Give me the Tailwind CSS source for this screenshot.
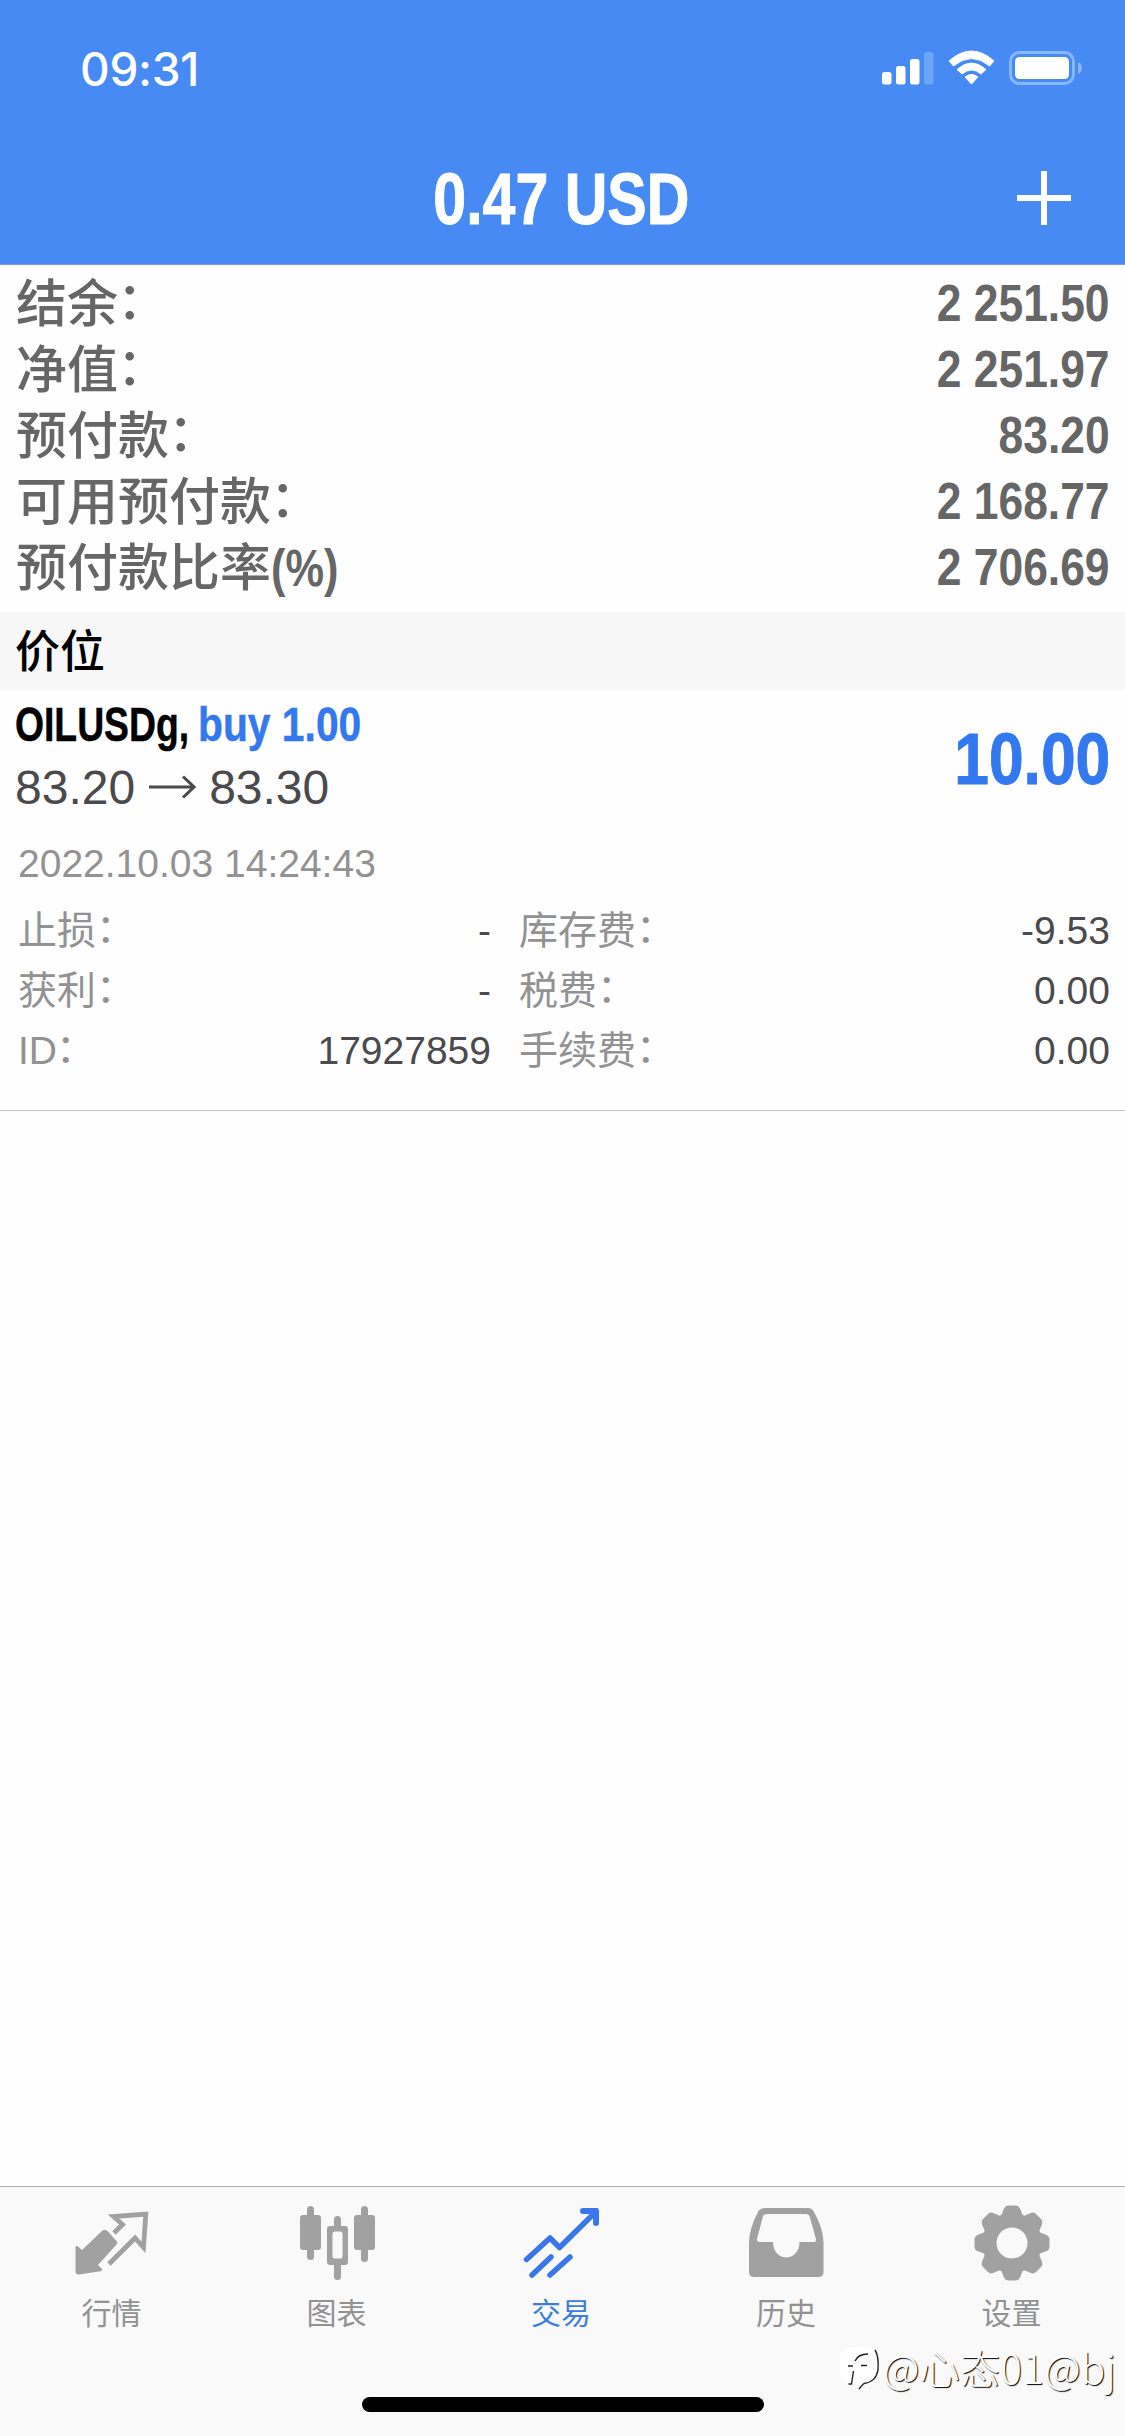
<!DOCTYPE html>
<html lang="zh-CN">
<head>
<meta charset="utf-8">
<title>交易</title>
<script src="https://cdn.jsdelivr.net/npm/@tailwindcss/browser@4"></script>
</head>
<body class="bg-white font-['Liberation_Sans','Noto_Sans_CJK_SC',sans-serif]">
<div class="flex h-[2436px] w-[1125px] flex-col overflow-hidden bg-[#fefefe]">

  <header class="flex h-[265px] flex-none flex-col border-b border-[#6f9fe0] bg-[#478af4] text-white">
    <div class="flex h-[132px] items-center justify-between pt-[6px] pr-[41px] pl-[80px]">
      <span class="font-['Inter','Liberation_Sans',sans-serif] text-[46px] leading-none font-medium tracking-[-0.3px]">09:31</span>
      <svg class="h-[40px] w-[204px]" viewBox="0 0 204 40" fill="#fff">
        <rect x="2" y="23" width="9.500" height="12.500" rx="2.500"/>
        <rect x="16" y="17" width="9.500" height="18.500" rx="2.500"/>
        <rect x="30" y="10" width="9.500" height="25.500" rx="2.500"/>
        <rect x="44" y="3" width="9.500" height="32.500" rx="2.500" fill="#6ba6f9"/>
        <path d="M69 12 Q91.500 -8 114 12 L109.500 17 Q91.500 2 73.500 17Z" stroke="#fff" stroke-width="1" stroke-linejoin="round"/>
        <path d="M77 20.500 Q91.500 7.500 106 20.500 L101 25 Q91.500 17 82 25Z" stroke="#fff" stroke-width="1" stroke-linejoin="round"/>
        <path d="M85 28 Q91.500 23 98 28 L91.500 35Z" stroke="#fff" stroke-width="1" stroke-linejoin="round"/>
        <rect x="130.500" y="3.500" width="63" height="31" rx="9" fill="none" stroke="#85b7fa" stroke-width="3"/>
        <rect x="135" y="8" width="54" height="22" rx="4.500"/>
        <path d="M198 13c3 1.500 4 3.500 4 6s-1 4.500-4 6z" fill="#85b7fa"/>
      </svg>
    </div>
    <div class="grid h-[132px] grid-cols-[1fr_auto_1fr] items-center">
      <span></span>
      <h1 class="pt-[2px] pr-[3px] scale-x-[.82] text-[72px] leading-none font-bold whitespace-nowrap [-webkit-text-stroke:1px]">0.47 USD</h1>
      <svg class="mr-[53px] h-[56px] w-[56px] justify-self-end" viewBox="0 0 56 56" stroke="#fff" stroke-width="6"><path d="M1 28H55M28 1V55"/></svg>
    </div>
  </header>

  <section class="h-[347px] flex-none pt-[7px] pr-[15px] pl-[16px] text-[51px] leading-[66px] font-medium text-[#666]">
    <div class="flex h-[66px] justify-between"><span>结余<span class="inline-block -translate-x-[1px] -translate-y-[3px]">：</span></span><span class="origin-right -translate-y-px scale-x-[.87] font-bold">2 251.50</span></div>
    <div class="flex h-[66px] justify-between"><span>净值<span class="inline-block -translate-x-[1px] -translate-y-[3px]">：</span></span><span class="origin-right -translate-y-px scale-x-[.87] font-bold">2 251.97</span></div>
    <div class="flex h-[66px] justify-between"><span>预付款<span class="inline-block -translate-x-[1px] -translate-y-[3px]">：</span></span><span class="origin-right -translate-y-px scale-x-[.87] font-bold">83.20</span></div>
    <div class="flex h-[66px] justify-between"><span>可用预付款<span class="inline-block -translate-x-[1px] -translate-y-[3px]">：</span></span><span class="origin-right -translate-y-px scale-x-[.87] font-bold">2 168.77</span></div>
    <div class="flex h-[66px] justify-between"><span class="flex">预付款比率<span class="origin-left scale-x-[.85] font-bold">(%)</span></span><span class="origin-right -translate-y-px scale-x-[.87] font-bold">2 706.69</span></div>
  </section>

  <h2 class="flex h-[78px] flex-none items-center bg-[#f7f7f7] px-[15px] pt-[2px] text-[45px] leading-none font-medium text-black">价位</h2>

  <section class="h-[421px] flex-none border-b border-[#c2c1c3] pr-[15px] pl-[15px]">
    <div class="flex h-[138px] justify-between">
      <div class="text-[48px]">
        <div class="flex h-[70px] items-center leading-none font-bold whitespace-nowrap [-webkit-text-stroke:0.5px]">
          <span class="w-[183px] origin-left scale-x-[.777] text-black">OILUSDg,</span>
          <span class="origin-left scale-x-[.85] text-[#3578ee]">buy 1.00</span>
        </div>
        <div class="flex h-[56px] items-center leading-none text-[#4a4a4c]">
          <span>83.20</span>
          <svg class="mx-[13px] h-[26px] w-[48px]" viewBox="0 0 48 26" fill="none" stroke="#4a4a4c" stroke-width="3"><path d="M1 12H46M35 1.500L46 12L35 22.500"/></svg>
          <span>83.30</span>
        </div>
      </div>
      <span class="origin-right scale-x-[.865] text-[72px] leading-[138px] font-bold text-[#3478f0] [-webkit-text-stroke:1px]">10.00</span>
    </div>
    <div class="mt-[3px] pl-[3px] text-[39px] leading-[66px] text-[#929292]">2022.10.03 14:24:43</div>
    <div class="mt-[4px] grid grid-cols-[473px_1fr] gap-x-[28px] pl-[3px] text-[39px] leading-[60px] text-[#929292]">
      <div class="flex h-[60px] justify-between"><span>止损<span class="inline-block -translate-y-[2px]">：</span></span><span class="text-[#4a4a4c]">-</span></div>
      <div class="flex h-[60px] justify-between"><span>库存费<span class="inline-block -translate-y-[2px]">：</span></span><span class="text-[#4a4a4c]">-9.53</span></div>
      <div class="flex h-[60px] justify-between"><span>获利<span class="inline-block -translate-y-[2px]">：</span></span><span class="text-[#4a4a4c]">-</span></div>
      <div class="flex h-[60px] justify-between"><span>税费<span class="inline-block -translate-y-[2px]">：</span></span><span class="text-[#4a4a4c]">0.00</span></div>
      <div class="flex h-[60px] justify-between"><span>ID<span class="inline-block -translate-x-[1px] -translate-y-[2px]">：</span></span><span class="text-[#4a4a4c]">17927859</span></div>
      <div class="flex h-[60px] justify-between"><span>手续费<span class="inline-block -translate-y-[2px]">：</span></span><span class="text-[#4a4a4c]">0.00</span></div>
    </div>
  </section>

  <main class="flex-1"></main>

  <footer class="relative h-[250px] flex-none border-t border-[#b2b2b2] bg-[#f9f9f9]">
    <nav class="grid grid-cols-5 pt-[13px] text-[30px] leading-none text-[#929292]">
      <a class="flex flex-col items-center pr-[2px]">
        <svg class="h-[99px] w-[90px]" viewBox="0 0 90 99" fill="#a1a1a1">
          <path d="M8.500 47.500C8.500 46 10 45.500 11 46.500L15 50L35 31Q38 28.500 41 31.500L50 41.500Q51 43 49.500 44.500L31 65L34.500 68.500Q36 70.500 33.500 71.300L12 74.500Q8.500 75 8.500 71.500Z"/>
          <path d="M47 33L55.500 24.500L46.500 16.500L78.800 14L76.500 47.500L68 38L42 64" fill="none" stroke="#a1a1a1" stroke-width="4.800" stroke-linejoin="miter"/>
        </svg>
        <span>行情</span>
      </a>
      <a class="flex flex-col items-center pr-[2px]">
        <svg class="h-[99px] w-[90px]" viewBox="0 0 90 99" fill="#a1a1a1">
          <rect x="15" y="6" width="7" height="54" rx="3.500"/><rect x="8" y="15" width="21" height="35" rx="3"/>
          <rect x="42" y="16" width="7" height="14" rx="3.500"/><rect x="42" y="60" width="7" height="20" rx="3.500"/>
          <path fill-rule="evenodd" d="M38 26h15q3 0 3 3v33q0 3-3 3H38q-3 0-3-3V29q0-3 3-3zm5 5.500q-2.500 0-2.500 2.500v22q0 2.500 2.500 2.500h5q2.500 0 2.500-2.500V34q0-2.500-2.500-2.500z"/>
          <rect x="69" y="6" width="7" height="56" rx="3.500"/><rect x="62" y="15" width="21" height="35" rx="3"/>
        </svg>
        <span>图表</span>
      </a>
      <a class="flex flex-col items-center pr-[3px] text-[#3d7de0]">
        <svg class="h-[99px] w-[90px]" viewBox="0 0 90 99" fill="none" stroke="#3a76ea" stroke-width="5.500" stroke-linecap="round" stroke-linejoin="round">
          <path d="M10.500 59.500L34 38L43.500 47.500L78 13.500"/>
          <path d="M67 11H80V23" stroke-width="6"/><path d="M70 9H81V20Z" fill="#3a76ea" stroke-width="2"/>
          <path d="M16 75L35 57M34 75L54 57"/>
        </svg>
        <span>交易</span>
      </a>
      <a class="flex flex-col items-center pr-[3px]">
        <svg class="h-[99px] w-[90px]" viewBox="0 0 90 99" fill="#a1a1a1">
          <path fill-rule="evenodd" d="M24 8H67Q71 8 73 12Q82 28 82.500 42V72Q82.500 77 77.500 77H13Q8 77 8 72V42Q8.500 28 17 12Q19 8 24 8ZM26 14Q23 14 22 16L16 39Q15.500 42 18.500 42H32C32 62.500 58.500 62.500 58.500 42H72Q75.500 42 75 39L68.500 16Q67.500 14 65 14Z"/>
        </svg>
        <span>历史</span>
      </a>
      <a class="flex flex-col items-center pr-[2px]">
        <svg class="h-[99px] w-[90px]" viewBox="0 0 90 99">
          <g transform="translate(45 43)" fill="#a1a1a1">
            <circle r="30"/>
            <path id="tooth" d="M-11 -27L-8 -34.500Q-6.500 -37.500 -3.500 -37.500H3.500Q6.500 -37.500 8 -34.500L11 -27Z"/>
            <use href="#tooth" transform="rotate(45)"/><use href="#tooth" transform="rotate(90)"/><use href="#tooth" transform="rotate(135)"/><use href="#tooth" transform="rotate(180)"/><use href="#tooth" transform="rotate(225)"/><use href="#tooth" transform="rotate(270)"/><use href="#tooth" transform="rotate(315)"/>
            <circle r="15.500" fill="#f9f9f9"/>
          </g>
        </svg>
        <span>设置</span>
      </a>
    </nav>
    <div class="absolute top-[210px] left-[362px] h-[15px] w-[402px] rounded-full bg-black"></div>
    <div class="absolute top-[154px] left-[840px] flex items-center text-white">
      <svg class="h-[52px] w-[43px]" viewBox="0 0 43 52" fill="none">
        <rect x="0" y="6" width="37" height="37" rx="12" fill="#fff"/>
        <path d="M8 25H13M21 24.500H27M15 20Q18 13 28 13M13.500 30L11.500 43H8.500M35 9Q39 15 38 29Q36 41 24 42.500Q22 44 19 48" stroke="#222" stroke-width="1.400"/>
      </svg>
      <span class="font-['Noto_Sans_CJK_SC',sans-serif] text-[40px] leading-none font-light tracking-[0.4px] whitespace-nowrap [text-shadow:1px_1px_1px_#000]">@心态01@bj</span>
    </div>
  </footer>
</div>
</body>
</html>
